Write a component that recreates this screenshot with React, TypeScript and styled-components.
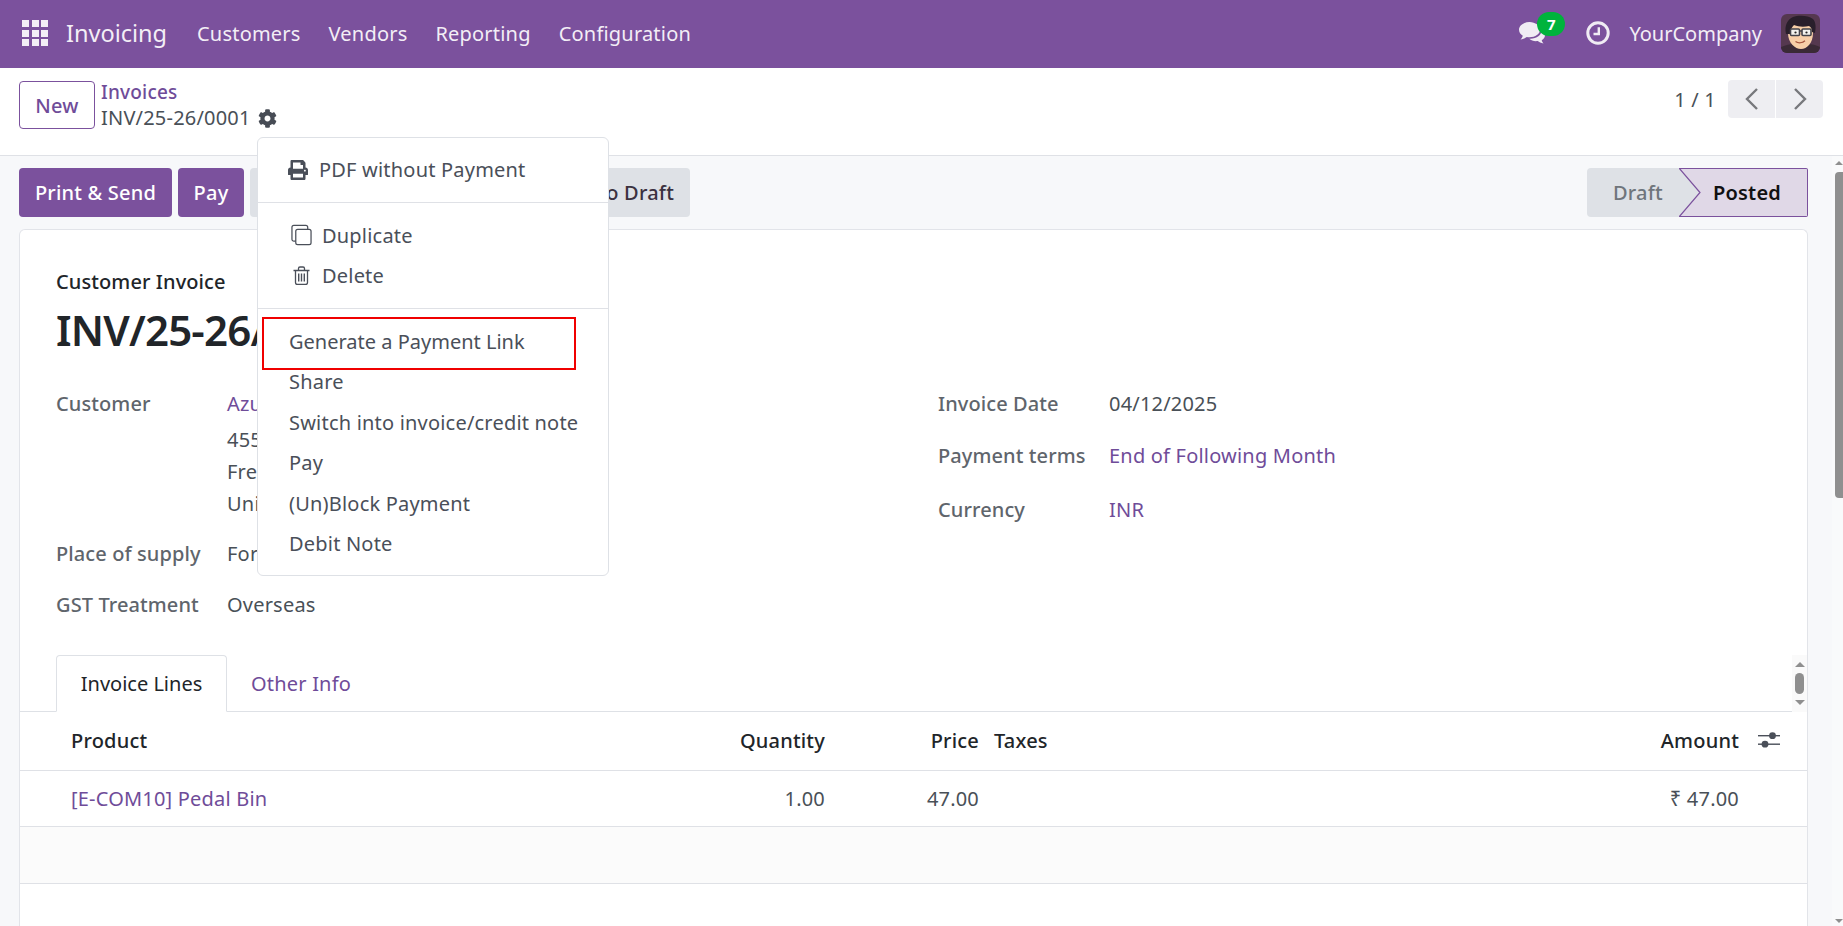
import React from "react";
import styled, { createGlobalStyle } from "styled-components";
import { FaCog, FaPrint } from "react-icons/fa";

const Global = createGlobalStyle`
  html, body { margin: 0; padding: 0; height: 926px; overflow: hidden; }
  * { box-sizing: border-box; }
  body { font-family: "Noto Sans", "Liberation Sans", sans-serif; font-size: 20px; letter-spacing: 0.2px; color: #495057; background: #f7f8fa; }
  button { letter-spacing: 0.2px; }
`;
const PURPLE = "#7b519d";
const LINK = "#6f4c99";

const Page = styled.div`
  position: relative;
  width: 1843px;
  height: 926px;
  overflow: hidden;
  display: flex;
  flex-direction: column;
`;
const Navbar = styled.header`
  height: 68px;
  flex: none;
  background: ${PURPLE};
  color: #f3eef6;
  display: flex;
  align-items: center;
  padding: 0 23px 2px 22px;
`;
const AppsGrid = styled.div`
  display: grid;
  grid-template-columns: repeat(3, 7px);
  grid-auto-rows: 7px;
  gap: 2.5px;
  margin-right: 18px;
  span { background: #f3eef6; }
`;
const Brand = styled.span`
  font-size: 23.5px;
  letter-spacing: 0;
  margin-right: 30px;
`;
const NavItem = styled.span`
  margin-right: 28px;
`;
const NavRight = styled.div`
  margin-left: auto;
  display: flex;
  align-items: center;
`;
const ChatWrap = styled.div`
  position: relative;
  width: 27px;
  height: 24px;
  margin-right: 40px;
`;
const Badge = styled.span`
  position: absolute;
  left: 18px;
  top: -9px;
  width: 28px;
  height: 24px;
  border-radius: 12px;
  background: #00b33c;
  color: #fff;
  font-size: 15px;
  font-weight: 700;
  display: flex;
  align-items: center;
  justify-content: center;
`;
const UserName = styled.span`
  margin: 0 19px;
  letter-spacing: 0;
`;
const Control = styled.div`
  height: 88px;
  flex: none;
  background: #fff;
  border-bottom: 1px solid #dfe1e6;
  padding: 13px 20px 0 19px;
  display: flex;
  align-items: flex-start;
`;
const NewButton = styled.button`
  width: 76px;
  height: 48px;
  background: #fff;
  border: 1px solid ${PURPLE};
  border-radius: 4px;
  color: ${LINK};
  font: 500 20px "Noto Sans", sans-serif;
  padding: 0;
`;
const Crumbs = styled.div`
  margin-left: 6px;
  display: flex;
  flex-direction: column;
  margin-top: -2px;
`;
const CrumbLink = styled.span`
  color: ${LINK};
  font-weight: 500;
  line-height: 26px;
  font-size: 19px;
`;
const CrumbCurrent = styled.span`
  display: flex;
  align-items: center;
  gap: 7px;
  line-height: 26px;
  svg { color: #474c55; }
`;
const Pager = styled.div`
  margin-left: auto;
  display: flex;
  align-items: center;
  height: 38px;
  margin-top: -1px;
`;
const PagerText = styled.span`
  margin-right: 12px;
`;
const PagerBtn = styled.button<{ $side: "l" | "r" }>`
  width: 47px;
  height: 38px;
  border: 0;
  padding: 0;
  background: #eeeef2;
  color: #77787c;
  display: flex;
  align-items: center;
  justify-content: center;
  margin-left: ${(p) => (p.$side === "r" ? "1px" : "0")};
  border-radius: ${(p) => (p.$side === "l" ? "4px 0 0 4px" : "0 4px 4px 0")};
`;
const Body = styled.div`
  flex: 1;
  min-height: 0;
  display: flex;
`;
const Main = styled.main`
  flex: 1;
  min-width: 0;
  padding: 12px 24px 0 19px;
  display: flex;
  flex-direction: column;
  gap: 12px;
`;
const ActionBar = styled.div`
  height: 49px;
  flex: none;
  display: flex;
  align-items: stretch;
  gap: 6px;
`;
const ActionBtn = styled.button<{ $primary?: boolean; $w: number }>`
  width: ${(p) => p.$w}px;
  border: 0;
  border-radius: 4px;
  background: ${(p) => (p.$primary ? PURPLE : "#dee1e6")};
  color: ${(p) => (p.$primary ? "#fff" : "#3b3140")};
  font: 500 20px "Noto Sans", sans-serif;
  padding: 0 16px;
  text-align: right;
  white-space: nowrap;
  overflow: hidden;
  ${(p) => (p.$primary ? "text-align:center;padding:0;" : "")}
`;
const Status = styled.div`
  margin-left: auto;
  display: flex;
  height: 49px;
`;
const StatusDraft = styled.div`
  width: 92px;
  background: #dee1e6;
  color: #6f757c;
  font-weight: 500;
  border-radius: 4px 0 0 4px;
  display: flex;
  align-items: center;
  padding-left: 26px;
`;
const StatusPosted = styled.div`
  position: relative;
  width: 129px;
  background: #e0d8e7;
  color: #111;
  font-weight: 600;
  border: 1px solid ${PURPLE};
  border-left: 0;
  border-radius: 0 2px 2px 0;
  display: flex;
  align-items: center;
  padding-left: 34px;
  svg { position: absolute; left: 0; top: -1px; }
`;
const Sheet = styled.section`
  flex: 1;
  min-height: 0;
  background: #fff;
  border: 1px solid #e2e4e9;
  border-bottom: 0;
  border-radius: 6px 6px 0 0;
  overflow: hidden;
`;
const Head = styled.div`
  padding: 36px 36px 0;
`;
const DocType = styled.div`
  font-weight: 500;
  color: #212529;
  line-height: 32px;
  letter-spacing: 0.1px;
`;
const DocTitle = styled.div`
  font-size: 42px;
  font-weight: 600;
  letter-spacing: -0.8px;
  color: #212529;
  line-height: 56px;
  margin-top: 4px;
`;
const Columns = styled.div`
  display: grid;
  grid-template-columns: 882px 1fr;
  padding: 30px 36px 0;
`;
const Col = styled.div`
  display: flex;
  flex-direction: column;
`;
const Field = styled.div<{ $top?: number }>`
  display: grid;
  grid-template-columns: 171px 1fr;
  line-height: 32px;
  margin-top: ${(p) => p.$top ?? 0}px;
`;
const Label = styled.div`
  color: #5f656c;
  font-weight: 500;
  white-space: nowrap;
  letter-spacing: 0.1px;
`;
const Value = styled.div<{ $link?: boolean }>`
  color: ${(p) => (p.$link ? LINK : "#495057")};
  white-space: nowrap;
`;
const AddressLine = styled.div<{ $first?: boolean }>`
  color: #495057;
  margin-top: ${(p) => (p.$first ? 4 : 0)}px;
`;
const TabBar = styled.div`
  display: flex;
  margin-top: 34px;
  height: 57px;
`;
const Tabs = styled.div`
  flex: 1;
  display: flex;
  padding-left: 36px;
  border-bottom: 1px solid #dee1e6;
`;
const ActiveTab = styled.div`
  width: 171px;
  height: 57px;
  display: flex;
  align-items: center;
  justify-content: center;
  color: #212529;
  background: #fff;
  border: 1px solid #dee1e6;
  border-bottom-color: #fff;
  border-radius: 4px 4px 0 0;
  letter-spacing: 0;
`;
const PlainTab = styled.div`
  height: 56px;
  display: flex;
  align-items: center;
  padding-left: 24px;
  color: ${LINK};
`;
const MiniScroll = styled.div`
  width: 15px;
  flex: none;
  background: #fafafa;
  display: flex;
  flex-direction: column;
  align-items: center;
  padding-top: 7px;
  i { display: block; width: 9px; height: 21px; border-radius: 5px; background: #8f8f8f; margin: 6px 0; }
`;
const ArrowUp = styled.span<{ $size?: number }>`
  display: block;
  width: 0;
  height: 0;
  border-left: ${(p) => p.$size ?? 5}px solid transparent;
  border-right: ${(p) => p.$size ?? 5}px solid transparent;
  border-bottom: ${(p) => p.$size ?? 5}px solid #8f8f8f;
`;
const ArrowDown = styled(ArrowUp)`
  border-bottom: 0;
  border-top: ${(p) => p.$size ?? 5}px solid #8f8f8f;
`;
const Row = styled.div<{ $head?: boolean; $shade?: boolean; $h: number }>`
  display: grid;
  grid-template-columns: 580px 225px 154px 221px 539px 68px;
  align-items: center;
  height: ${(p) => p.$h}px;
  padding-bottom: ${(p) => (p.$head ? 2 : 0)}px;
  border-bottom: 1px solid #dfe1e6;
  background: ${(p) => (p.$shade ? "#fbfbfb" : "#fff")};
  color: ${(p) => (p.$head ? "#212529" : "#495057")};
  font-weight: ${(p) => (p.$head ? 500 : 400)};
`;
const ProductCell = styled.div<{ $link?: boolean }>`
  padding-left: 51px;
  color: ${(p) => (p.$link ? LINK : "inherit")};
`;
const NumCell = styled.div`
  text-align: right;
`;
const TaxCell = styled.div`
  padding-left: 15px;
`;
const IconCell = styled.div`
  padding-left: 19px;
  display: flex;
  align-items: center;
`;
const PageScroll = styled.div`
  width: 11px;
  flex: none;
  display: flex;
  flex-direction: column;
  align-items: flex-end;
  padding-top: 5px;
  background: #f9fafb;
  i { display: block; width: 8px; height: 326px; border-radius: 4px 0 0 4px; background: #8f8f8f; margin-top: 7px; }
`;
const PageScrollDown = styled.div`
  margin-top: auto;
  margin-bottom: 3px;
`;
const Menu = styled.div`
  position: absolute;
  left: 257px;
  top: 137px;
  width: 352px;
  height: 439px;
  background: #fff;
  border: 1px solid #dee1e6;
  border-radius: 6px;
  padding: 11.5px 0;
  color: #4a4f59;
  z-index: 5;
`;
const MenuItem = styled.div<{ $pad?: number; $tight?: boolean }>`
  position: relative;
  height: 40.5px;
  display: flex;
  align-items: center;
  padding-left: ${(p) => p.$pad ?? 31}px;
  white-space: nowrap;
  letter-spacing: ${(p) => (p.$tight ? 0 : 0.2)}px;
`;
const MenuIcon = styled.span<{ $w: number; $gap: number }>`
  width: ${(p) => p.$w}px;
  margin-right: ${(p) => p.$gap}px;
  flex: none;
  display: flex;
  justify-content: center;
`;
const MenuDivider = styled.div`
  height: 1px;
  background: #dfe1e6;
  margin: 11.5px 0 12.5px;
`;
const Highlight = styled.div`
  position: absolute;
  left: 4px;
  top: -4px;
  width: 314px;
  height: 53px;
  border: 2px solid #f00000;
`;

const Avatar = () => (
  <svg width="39" height="39" viewBox="0 0 39 39" style={{ borderRadius: 6 }}>
    <rect width="39" height="39" fill="#55384f" />
    <path d="M0 39V33c5-2 9-3 12-3h15c4 0 8 1 12 3v6z" fill="#3a2a36" />
    <path d="M7 19c0-9 6-13 13-13s12 4 12 13c0 10-6 16-12 16S7 29 7 19z" fill="#f7cfa8" />
    <path d="M5 20C3 11 7 5 12 3c5-2 15-2 20 2 3 3 3 9 2 14l-3-1c0-3-1-5-3-6-5 1-10 1-15-1-2 2-4 5-4 9z" fill="#291f2b" />
    <rect x="9.500" y="15" width="9" height="6.500" rx="1" fill="#f3f3ee" stroke="#43434a" strokeWidth="1.600" />
    <rect x="21" y="15" width="9" height="6.500" rx="1" fill="#f3f3ee" stroke="#43434a" strokeWidth="1.600" />
    <path d="M18.500 17h2.500" stroke="#43434a" strokeWidth="1.400" />
    <circle cx="14.500" cy="18.500" r="1.100" fill="#222" />
    <circle cx="25.500" cy="18.500" r="1.100" fill="#222" />
    <path d="M14.500 27.500c3 2 7 1.500 9.500-.8" fill="none" stroke="#a5553e" strokeWidth="1.300" />
  </svg>
);
const ChatIcon = () => (
  <svg width="29" height="24" viewBox="0 0 29 24" fill="#f0ecf4">
    <path d="M10.500 1C4.700 1 0 4.500 0 8.800c0 2.400 1.500 4.600 3.800 6C3.400 16.300 2.600 17.600 1.500 18.500c2.400-.2 4.700-1.300 6.300-2.500.9.200 1.800.3 2.700.3 5.800 0 10.500-3.400 10.500-7.500S16.300 1 10.500 1z" />
    <path d="M22.500 7.500c.2.500.2 1 .2 1.500 0 4.900-5 8.800-11.200 8.800H10.300c1.600 1.500 4 2.400 6.700 2.400.6 0 1.200 0 1.800-.1 1.300 1 3.200 2 5.700 2.400-.9-.8-1.500-2-1.800-3.200 2.100-1.300 3.300-3.100 3.300-5.100 0-2.500-1.800-4.800-3.500-6.700z" />
  </svg>
);
const ClockIcon = () => (
  <svg width="24" height="24" viewBox="0 0 24 24" fill="none" stroke="#f0ecf4">
    <circle cx="12" cy="12" r="10.200" strokeWidth="3" />
    <path d="M12.800 6.200v6.800H7.500" strokeWidth="2.400" />
  </svg>
);
const SlidersIcon = () => (
  <svg width="22" height="18" viewBox="0 0 22 18" fill="#4a4f59">
    <rect x="0" y="4" width="22" height="1.400" />
    <rect x="0" y="12.500" width="22" height="1.400" />
    <circle cx="14.500" cy="4.700" r="3.400" />
    <circle cx="7" cy="13.200" r="3.400" />
  </svg>
);
const Chevron = ({ d }: { d: string }) => (
  <svg width="14" height="22" viewBox="0 0 14 22" fill="none" stroke="currentColor" strokeWidth="2.400">
    <path d={d} />
  </svg>
);
const CloneIcon = () => (
  <svg width="22" height="22" viewBox="0 0 22 22" fill="none" stroke="#4a4f59" strokeWidth="1.300">
    <rect x="5" y="5" width="16" height="16" rx="2" />
    <path d="M5 17.500H3a2 2 0 0 1-2-2V3a2 2 0 0 1 2-2h12.500a2 2 0 0 1 2 2v2" />
  </svg>
);
const TrashIcon = () => (
  <svg width="17" height="19" viewBox="0 0 17 19" fill="none" stroke="#4a4f59" strokeWidth="1.300">
    <path d="M0.500 4.500h16M2.500 4.500v12a2 2 0 0 0 2 2h8a2 2 0 0 0 2-2v-12" />
    <path d="M5.500 4.500V2.500a1.500 1.500 0 0 1 1.500-1.500h3a1.500 1.500 0 0 1 1.500 1.500v2" />
    <path d="M5.700 7.500v8M8.500 7.500v8M11.300 7.500v8" strokeWidth="1.400" />
  </svg>
);

export default function App() {
  return (
    <Page>
      <Global />
      <Navbar>
        <AppsGrid>
          {Array.from({ length: 9 }, (_, i) => (
            <span key={i} />
          ))}
        </AppsGrid>
        <Brand>Invoicing</Brand>
        <NavItem>Customers</NavItem>
        <NavItem>Vendors</NavItem>
        <NavItem>Reporting</NavItem>
        <NavItem>Configuration</NavItem>
        <NavRight>
          <ChatWrap>
            <ChatIcon />
            <Badge>7</Badge>
          </ChatWrap>
          <ClockIcon />
          <UserName>YourCompany</UserName>
          <Avatar />
        </NavRight>
      </Navbar>
      <Control>
        <NewButton>New</NewButton>
        <Crumbs>
          <CrumbLink>Invoices</CrumbLink>
          <CrumbCurrent>
            INV/25-26/0001 <FaCog size={19} />
          </CrumbCurrent>
        </Crumbs>
        <Pager>
          <PagerText>1 / 1</PagerText>
          <PagerBtn $side="l">
            <Chevron d="M12 1 L2 11 L12 21" />
          </PagerBtn>
          <PagerBtn $side="r">
            <Chevron d="M2 1 L12 11 L2 21" />
          </PagerBtn>
        </Pager>
      </Control>
      <Body>
        <Main>
          <ActionBar>
            <ActionBtn $primary $w={153}>Print &amp; Send</ActionBtn>
            <ActionBtn $primary $w={66}>Pay</ActionBtn>
            <ActionBtn $w={440}>Reset to Draft</ActionBtn>
            <Status>
              <StatusDraft>Draft</StatusDraft>
              <StatusPosted>
                <svg width="22" height="49" viewBox="0 0 22 49">
                  <path d="M0 0 L21 24.500 L0 49 Z" fill="#dee1e6" />
                  <path d="M0 0 L21 24.500 L0 49" fill="none" stroke={PURPLE} strokeWidth="1.200" />
                </svg>
                Posted
              </StatusPosted>
            </Status>
          </ActionBar>
          <Sheet>
            <Head>
              <DocType>Customer Invoice</DocType>
              <DocTitle>INV/25-26/0001</DocTitle>
            </Head>
            <Columns>
              <Col>
                <Field>
                  <Label>Customer</Label>
                  <Value>
                    <Value $link>Azure Interior</Value>
                    <AddressLine $first>4557 De Silva St</AddressLine>
                    <AddressLine>Fremont CA 94538</AddressLine>
                    <AddressLine>United States</AddressLine>
                  </Value>
                </Field>
                <Field $top={18}>
                  <Label>Place of supply</Label>
                  <Value>Foreign</Value>
                </Field>
                <Field $top={19}>
                  <Label>GST Treatment</Label>
                  <Value>Overseas</Value>
                </Field>
              </Col>
              <Col>
                <Field>
                  <Label>Invoice Date</Label>
                  <Value>04/12/2025</Value>
                </Field>
                <Field $top={20}>
                  <Label>Payment terms</Label>
                  <Value $link>End of Following Month</Value>
                </Field>
                <Field $top={22}>
                  <Label>Currency</Label>
                  <Value $link>INR</Value>
                </Field>
              </Col>
            </Columns>
            <TabBar>
              <Tabs>
                <ActiveTab>Invoice Lines</ActiveTab>
                <PlainTab>Other Info</PlainTab>
              </Tabs>
              <MiniScroll>
                <ArrowUp />
                <i />
                <ArrowDown />
              </MiniScroll>
            </TabBar>
            <Row $head $h={59}>
              <ProductCell>Product</ProductCell>
              <NumCell>Quantity</NumCell>
              <NumCell>Price</NumCell>
              <TaxCell>Taxes</TaxCell>
              <NumCell>Amount</NumCell>
              <IconCell>
                <SlidersIcon />
              </IconCell>
            </Row>
            <Row $h={56}>
              <ProductCell $link>[E-COM10] Pedal Bin</ProductCell>
              <NumCell>1.00</NumCell>
              <NumCell>47.00</NumCell>
              <TaxCell />
              <NumCell>₹ 47.00</NumCell>
              <IconCell />
            </Row>
            <Row $shade $h={57} />
          </Sheet>
        </Main>
        <PageScroll>
          <ArrowUp $size={4} />
          <i />
          <PageScrollDown>
            <ArrowDown $size={4} />
          </PageScrollDown>
        </PageScroll>
      </Body>
      <Menu>
        <MenuItem $pad={30}>
          <MenuIcon $w={20} $gap={11}>
            <FaPrint size={20} />
          </MenuIcon>
          PDF without Payment
        </MenuItem>
        <MenuDivider />
        <MenuItem $pad={33}>
          <MenuIcon $w={21} $gap={10}>
            <CloneIcon />
          </MenuIcon>
          Duplicate
        </MenuItem>
        <MenuItem $pad={33}>
          <MenuIcon $w={21} $gap={10}>
            <TrashIcon />
          </MenuIcon>
          Delete
        </MenuItem>
        <MenuDivider />
        <MenuItem $tight>
          <Highlight />
          Generate a Payment Link
        </MenuItem>
        <MenuItem>Share</MenuItem>
        <MenuItem>Switch into invoice/credit note</MenuItem>
        <MenuItem>Pay</MenuItem>
        <MenuItem>(Un)Block Payment</MenuItem>
        <MenuItem>Debit Note</MenuItem>
      </Menu>
    </Page>
  );
}
